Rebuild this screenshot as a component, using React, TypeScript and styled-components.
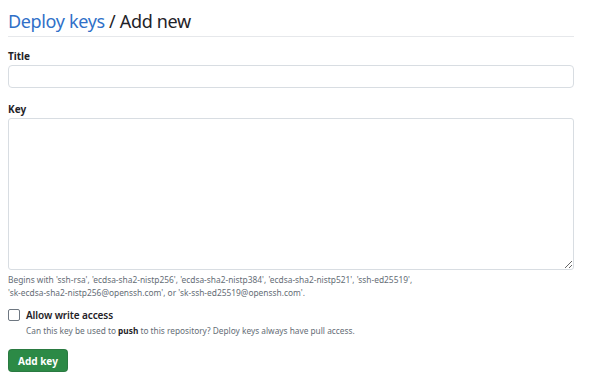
import React from "react";
import styled, { createGlobalStyle } from "styled-components";

const Global = createGlobalStyle`
  html, body { margin: 0; padding: 0; background: #ffffff; }
  body { font-family: "Noto Sans", "Open Sans", sans-serif; color: #1f2328; }
`;

const Page = styled.div`
  width: 566px;
  padding: 6px 26px 0 8px;
  display: flex;
  flex-direction: column;
`;

const Subhead = styled.div`
  display: flex;
  align-items: center;
  height: 30px;
  border-bottom: 1px solid #e6e8eb;
  margin-bottom: 12px;
`;

const Heading = styled.h1`
  margin: 0;
  font-size: 18px;
  letter-spacing: -0.35px;
  font-weight: 400;
  line-height: 26px;
  color: #1f2328;
`;

const Crumb = styled.a`
  color: #3070c8;
  text-decoration: none;
`;

const Field = styled.div<{ $gap?: number }>`
  display: flex;
  flex-direction: column;
  margin-bottom: ${(p) => p.$gap ?? 0}px;
`;

const Label = styled.label`
  font-size: 10px;
  font-weight: 700;
  line-height: 14px;
  margin-bottom: 2px;
`;

const Input = styled.input`
  box-sizing: border-box;
  height: 23px;
  width: 100%;
  border: 1px solid #d8dde2;
  border-radius: 4px;
  background: #fff;
  padding: 0 6px;
  font: inherit;
`;

const TextArea = styled.textarea`
  box-sizing: border-box;
  height: 152px;
  width: 100%;
  border: 1px solid #d8dde2;
  border-radius: 3px;
  background: #fff;
  display: block;
  resize: vertical;
  font: inherit;
`;

const Note = styled.p`
  margin: 3px 0 0;
  font-size: 8.4px;
  line-height: 13px;
  color: #656d76;
`;

const CheckRow = styled.div`
  display: flex;
  align-items: center;
  gap: 6px;
  margin-top: 9px;
`;

const Box = styled.input`
  appearance: none;
  margin: 0;
  width: 12px;
  height: 12px;
  border: 1px solid #6e7781;
  border-radius: 2px;
  background: #fff;
`;

const CheckLabel = styled.label`
  font-size: 10px;
  letter-spacing: -0.1px;
  font-weight: 600;
  line-height: 14px;
`;

const Hint = styled.p`
  margin: 3px 0 0 18px;
  font-size: 8.3px;
  line-height: 12px;
  color: #656d76;
  b { color: #1f2328; font-weight: 700; }
`;

const Button = styled.button`
  align-self: flex-start;
  margin-top: 12px;
  height: 23px;
  padding: 0 9px;
  border: 1px solid rgba(31, 35, 40, 0.15);
  border-radius: 4px;
  background: #2c8a46;
  color: #fff;
  font: inherit;
  font-size: 10px;
  font-weight: 700;
`;

export default function App() {
  return (
    <>
      <Global />
      <Page>
        <Subhead>
          <Heading>
            <Crumb href="#">Deploy keys</Crumb> / Add new
          </Heading>
        </Subhead>
        <Field $gap={14}>
          <Label>Title</Label>
          <Input type="text" />
        </Field>
        <Field>
          <Label>Key</Label>
          <TextArea />
          <Note>
            Begins with 'ssh-rsa', 'ecdsa-sha2-nistp256', 'ecdsa-sha2-nistp384', 'ecdsa-sha2-nistp521', 'ssh-ed25519',
            <br />
            'sk-ecdsa-sha2-nistp256@openssh.com', or 'sk-ssh-ed25519@openssh.com'.
          </Note>
        </Field>
        <CheckRow>
          <Box type="checkbox" />
          <CheckLabel>Allow write access</CheckLabel>
        </CheckRow>
        <Hint>
          Can this key be used to <b>push</b> to this repository? Deploy keys always have pull access.
        </Hint>
        <Button>Add key</Button>
      </Page>
    </>
  );
}
